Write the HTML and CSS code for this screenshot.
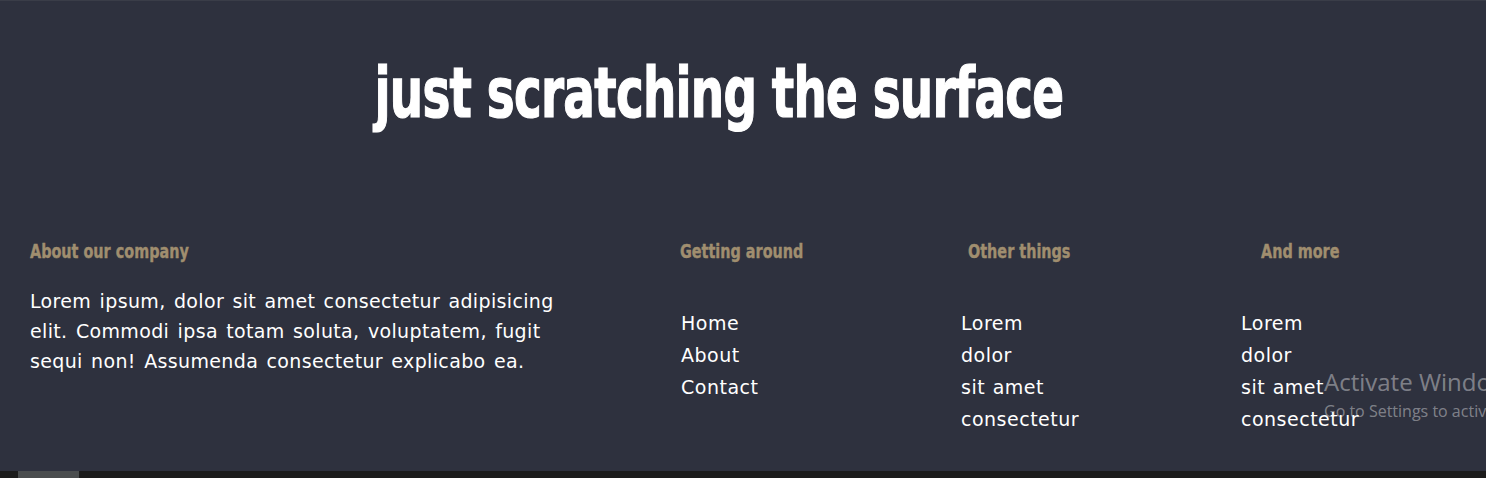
FILE: index.html
```html
<!DOCTYPE html>
<html>
<head>
<meta charset="utf-8">
<link rel="stylesheet" href="styles.css">
</head>
<body>
<div class="page">
  <header class="hero">
    <h1 class="title">just scratching the surface</h1>
  </header>
  <section class="cols">
    <div class="col col-about">
      <h2 class="col-head">About our company</h2>
      <p class="about-text">Lorem ipsum, dolor sit amet consectetur adipisicing elit. Commodi ipsa totam soluta, voluptatem, fugit sequi non! Assumenda consectetur explicabo ea.</p>
    </div>
    <div class="col col-2">
      <h2 class="col-head">Getting around</h2>
      <ul class="links">
        <li>Home</li>
        <li>About</li>
        <li>Contact</li>
      </ul>
    </div>
    <div class="col col-3">
      <h2 class="col-head">Other things</h2>
      <ul class="links">
        <li>Lorem</li>
        <li>dolor</li>
        <li>sit amet</li>
        <li>consectetur</li>
      </ul>
    </div>
    <div class="col col-4">
      <h2 class="col-head">And more</h2>
      <ul class="links">
        <li>Lorem</li>
        <li>dolor</li>
        <li>sit amet</li>
        <li>consectetur</li>
      </ul>
    </div>
  </section>
  <div class="scrollbar"><div class="thumb"></div></div>
  <div class="watermark">
    <div class="wm-title">Activate Windows</div>
    <div class="wm-sub">Go to Settings to activate Windows.</div>
  </div>
</div>
</body>
</html>
```
FILE: styles.css
```css
html, body {
  margin: 0;
  padding: 0;
  background: #2e313e;
  overflow: hidden;
}
.page {
  position: relative;
  width: 1486px;
  height: 478px;
  background: #2e313e;
  border-top: 1px solid #3a3d48;
  box-sizing: border-box;
  display: flex;
  flex-direction: column;
  overflow: hidden;
}
.hero {
  display: flex;
  justify-content: center;
  padding: 52px 48px 0 0;
  height: 175px;
  box-sizing: border-box;
}
.title {
  margin: 0;
  color: #ffffff;
  font-family: "DejaVu Sans Condensed", sans-serif;
  font-weight: 700;
  font-size: 70px;
  line-height: 80px;
  letter-spacing: -1px;
  display: inline-block;
  white-space: nowrap;
  -webkit-text-stroke: 1.2px #ffffff;
  transform: scaleX(0.744);
  transform-origin: center;
}
.cols {
  display: grid;
  grid-template-columns: 650px 280px 280px 1fr;
  padding-left: 30px;
  flex: 1;
}
.col-head {
  margin: 0;
  color: #a08e6f;
  font-family: "DejaVu Sans Condensed", sans-serif;
  font-weight: 700;
  font-size: 20px;
  line-height: 26px;
  padding-top: 62px;
  white-space: nowrap;
  -webkit-text-stroke: 0.4px #a08e6f;
  transform: scaleX(0.8);
  transform-origin: left center;
}
.col-3 .col-head { margin-left: 8px; }
.col-4 .col-head { margin-left: 21px; }
.about-text {
  margin: 22px 0 0 0;
  width: 560px;
  color: #ffffff;
  font-family: "DejaVu Sans", sans-serif;
  font-size: 19px;
  line-height: 30px;
  letter-spacing: 0.35px;
  word-spacing: 2px;
}
.links {
  list-style: none;
  margin: 43px 0 0 0;
  padding: 0 0 0 1px;
  color: #ffffff;
  font-family: "DejaVu Sans", sans-serif;
  font-size: 19px;
  line-height: 32px;
  letter-spacing: 0.5px;
  word-spacing: 1px;
}
.scrollbar {
  height: 7px;
  background: #1c1c1c;
  position: relative;
  flex: none;
}
.thumb {
  position: absolute;
  left: 18px;
  top: 0;
  width: 61px;
  height: 7px;
  background: #4a4d4e;
}
.watermark {
  position: absolute;
  left: 1324px;
  top: 365px;
  color: rgba(255,255,255,0.4);
  font-family: "Open Sans", "Noto Sans", sans-serif;
  white-space: nowrap;
}
.wm-title {
  font-size: 24px;
  line-height: 32px;
}
.wm-sub {
  font-size: 16px;
  line-height: 22px;
  margin-top: 2px;
}
```
